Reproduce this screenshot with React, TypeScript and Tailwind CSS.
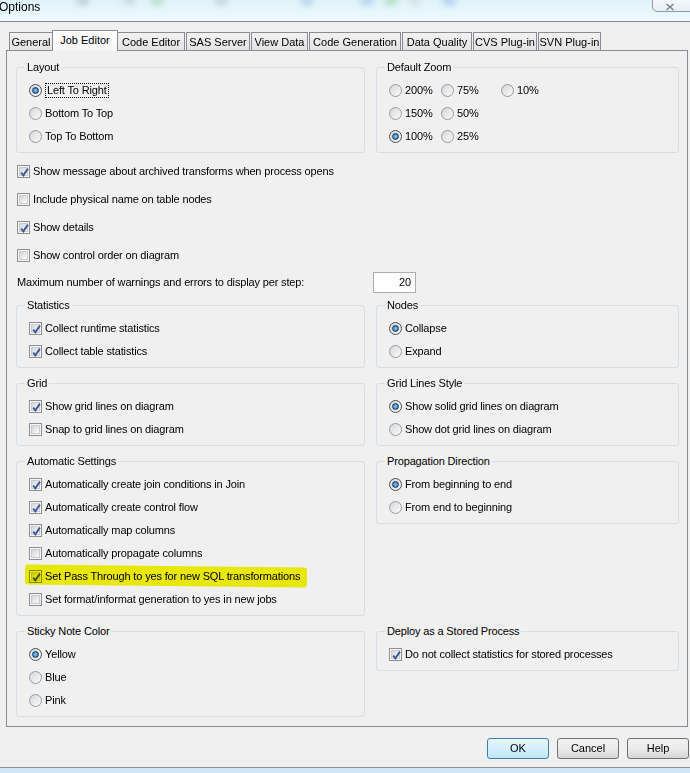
import React from 'react';

type Tab = { label: string; w: string; active?: boolean };

const tabs: Tab[] = [
  { label: 'General', w: 'w-[44px]' },
  { label: 'Job Editor', w: 'w-[62px]', active: true },
  { label: 'Code Editor', w: 'w-[68px]' },
  { label: 'SAS Server', w: 'w-[64px]' },
  { label: 'View Data', w: 'w-[57px]' },
  { label: 'Code Generation', w: 'w-[92px]' },
  { label: 'Data Quality', w: 'w-[70px]' },
  { label: 'CVS Plug-in', w: 'w-[64px]' },
  { label: 'SVN Plug-in', w: 'w-[63px]' },
];

const CheckBox = ({ checked }: { checked: boolean }) => (
  <span className="relative flex h-[13px] w-[13px] shrink-0 items-center justify-center border border-[#8e8f8f] bg-[#f6f6f6]">
    <span className="h-[9px] w-[9px] border border-[#c9cbcf] bg-linear-to-br from-[#d3d5d9] to-[#fbfbfb]" />
    {checked && (
      <svg className="absolute left-[1px] top-[1px]" width="11" height="11" viewBox="0 0 11 11">
        <path d="M2.2 5.6 L4.4 8.3 L8.9 1.6" fill="none" stroke="#3c5a9a" strokeWidth="1.9" />
      </svg>
    )}
  </span>
);

const Radio = ({ checked }: { checked: boolean }) => (
  <span
    className={`flex h-[13px] w-[13px] shrink-0 items-center justify-center rounded-full border bg-linear-to-br from-[#d4d6da] to-[#fbfbfb] ${
      checked ? 'border-[#4e4e4e]' : 'border-[#9a9a9a]'
    }`}
  >
    {checked && (
      <span className="h-[7px] w-[7px] rounded-full border border-[#1d3b5c] bg-radial from-[#8fd0fb] to-[#0b5aa3]" />
    )}
  </span>
);

const Group: React.FC<{ title: string; children: React.ReactNode }> = ({ title, children }) => (
  <div className="relative rounded-[3px] border border-[#d5dfe5] pb-[4px] pt-[11px]">
    <span className="absolute left-[8px] top-[-8px] bg-[#f0f0f0] px-[2px] leading-[14px]">{title}</span>
    {children}
  </div>
);

const CheckRow = ({ label, checked = false }: { label: string; checked?: boolean }) => (
  <div className="flex h-[23px] items-center gap-[3px] pl-[12px]">
    <CheckBox checked={checked} />
    <span>{label}</span>
  </div>
);

const RadioRow = ({ label, checked = false, focus = false }: { label: string; checked?: boolean; focus?: boolean }) => (
  <div className="flex h-[23px] items-center gap-[3px] pl-[12px]">
    <Radio checked={checked} />
    <span className={focus ? 'border border-dotted border-black px-[1px] leading-[13px]' : ''}>{label}</span>
  </div>
);

const Row = ({ label, checked = false }: { label: string; checked?: boolean }) => (
  <div className="flex h-[28px] items-center gap-[3px] pl-[1px]">
    <CheckBox checked={checked} />
    <span>{label}</span>
  </div>
);

const Button = ({ label, primary = false }: { label: string; primary?: boolean }) => (
  <div
    className={`flex h-[21px] w-[62px] items-center justify-center rounded-[3px] border ${
      primary
        ? 'border-[#3c7fb1] bg-linear-to-b from-[#eaf6fd] to-[#bee6fd]'
        : 'border-[#707070] bg-linear-to-b from-[#f2f2f2] via-[#ebebeb] to-[#d5d5d5]'
    }`}
  >
    {label}
  </div>
);

const blobs = [
  { x: 'left-[76px]', c: 'bg-[#b8c4cc]' },
  { x: 'left-[122px]', c: 'bg-[#c6d6dc]' },
  { x: 'left-[150px]', c: 'bg-[#a8d8b8]' },
  { x: 'left-[214px]', c: 'bg-[#c2ccd6]' },
  { x: 'left-[300px]', c: 'bg-[#b0c8e8]' },
  { x: 'left-[360px]', c: 'bg-[#a9c6ef]' },
  { x: 'left-[384px]', c: 'bg-[#a6dcb4]' },
  { x: 'left-[408px]', c: 'bg-[#d6dde2]' },
  { x: 'left-[442px]', c: 'bg-[#a4c4ee]' },
];

export default function App() {
  return (
    <div className="relative flex h-[773px] w-[690px] flex-col overflow-hidden bg-[#f0f0f0] font-['Liberation_Sans',Arial,sans-serif] text-[11px] tracking-[-0.15px] text-black">
      {/* title bar */}
      <div className="relative h-[22px] shrink-0 border-b border-[#8a8a8a] bg-linear-to-b from-[#e0f3fa] to-[#eefaff]">
        {blobs.map((b, i) => (
          <span key={i} className={`absolute top-[-6px] h-[12px] w-[14px] rounded-full opacity-70 blur-[3px] ${b.x} ${b.c}`} />
        ))}
        <span className="absolute left-[-1px] top-[0px] text-[12px] leading-[15px] tracking-normal">Options</span>
        <div className="absolute left-[652px] top-[-2px] flex h-[14px] w-[42px] items-center justify-center rounded-bl-[5px] border border-[#8d9aae] bg-linear-to-b from-[#f7fafd] to-[#e6eef5]">
          <svg width="10" height="8" viewBox="0 0 10 8" className="ml-[-6px] mt-[3px]">
            <path d="M1.5 1 L8.5 7 M8.5 1 L1.5 7" stroke="#6b7685" strokeWidth="1.1" fill="none" />
          </svg>
        </div>
      </div>

      {/* tabs */}
      <div className="flex h-[28px] shrink-0 items-end gap-[1px] pl-[9px] tracking-normal">
        {tabs.map((t) =>
          t.active ? (
            <div
              key={t.label}
              className="relative z-10 mx-[-2px] -mb-[1px] flex h-[21px] w-[66px] items-start justify-center border border-b-0 border-[#898c95] bg-linear-to-b from-white to-[#f6f6f6] pt-[2px] leading-[14px]"
            >
              {t.label}
            </div>
          ) : (
            <div
              key={t.label}
              className={`flex h-[18px] ${t.w} items-center justify-center border border-b-0 border-[#898c95] bg-linear-to-b from-[#f2f2f2] to-[#e3e3e3] pt-[1px]`}
            >
              {t.label}
            </div>
          )
        )}
      </div>

      {/* panel */}
      <div className="ml-[6px] h-[677px] w-[682px] shrink-0 border border-[#898c95] bg-[#f0f0f0] pl-[9px] pr-[8px]">
        <div className="mt-[16px] grid grid-cols-[349px_303px] gap-x-[11px]">
          <Group title="Layout">
            <RadioRow label="Left To Right" checked focus />
            <RadioRow label="Bottom To Top" />
            <RadioRow label="Top To Bottom" />
          </Group>
          <Group title="Default Zoom">
            <div className="grid grid-cols-[64px_60px_1fr]">
              <RadioRow label="200%" />
              <div className="-ml-[12px]"><RadioRow label="75%" /></div>
              <div className="-ml-[12px]"><RadioRow label="10%" /></div>
              <RadioRow label="150%" />
              <div className="-ml-[12px]"><RadioRow label="50%" /></div>
              <div />
              <RadioRow label="100%" checked />
              <div className="-ml-[12px]"><RadioRow label="25%" /></div>
              <div />
            </div>
          </Group>
        </div>

        <div className="mt-[4px]">
          <Row label="Show message about archived transforms when process opens" checked />
          <Row label="Include physical name on table nodes" />
          <Row label="Show details" checked />
          <Row label="Show control order on diagram" />
          <div className="flex h-[26px] items-center pl-[1px]">
            <span className="w-[356px]">Maximum number of warnings and errors to display per step:</span>
            <div className="flex h-[21px] w-[43px] items-center justify-end border border-[#abadb3] bg-white pr-[4px]">20</div>
          </div>
        </div>

        <div className="mt-[10px] grid grid-cols-[349px_303px] items-start gap-x-[11px]">
          <Group title="Statistics">
            <CheckRow label="Collect runtime statistics" checked />
            <CheckRow label="Collect table statistics" checked />
          </Group>
          <Group title="Nodes">
            <RadioRow label="Collapse" checked />
            <RadioRow label="Expand" />
          </Group>
        </div>

        <div className="mt-[15px] grid grid-cols-[349px_303px] items-start gap-x-[11px]">
          <Group title="Grid">
            <CheckRow label="Show grid lines on diagram" checked />
            <CheckRow label="Snap to grid lines on diagram" />
          </Group>
          <Group title="Grid Lines Style">
            <RadioRow label="Show solid grid lines on diagram" checked />
            <RadioRow label="Show dot grid lines on diagram" />
          </Group>
        </div>

        <div className="mt-[15px] grid grid-cols-[349px_303px] items-start gap-x-[11px]">
          <Group title="Automatic Settings">
            <CheckRow label="Automatically create join conditions in Join" checked />
            <CheckRow label="Automatically create control flow" checked />
            <CheckRow label="Automatically map columns" checked />
            <CheckRow label="Automatically propagate columns" />
            <div className="relative">
              <CheckRow label="Set Pass Through to yes for new SQL transformations" checked />
              {/* highlighter mark */}
              <span className="pointer-events-none absolute left-[8px] top-[1px] h-[20px] w-[282px] rotate-[0.6deg] rounded-[3px] bg-[#f6f60a] mix-blend-multiply" />
            </div>
            <CheckRow label="Set format/informat generation to yes in new jobs" />
          </Group>
          <Group title="Propagation Direction">
            <RadioRow label="From beginning to end" checked />
            <RadioRow label="From end to beginning" />
          </Group>
        </div>

        <div className="mt-[15px] grid grid-cols-[349px_303px] items-start gap-x-[11px]">
          <Group title="Sticky Note Color">
            <RadioRow label="Yellow" checked />
            <RadioRow label="Blue" />
            <RadioRow label="Pink" />
          </Group>
          <Group title="Deploy as a Stored Process">
            <CheckRow label="Do not collect statistics for stored processes" checked />
          </Group>
        </div>
      </div>

      {/* buttons */}
      <div className="mt-[11px] flex h-[21px] shrink-0 justify-end gap-[8px] pr-[1px] tracking-normal">
        <Button label="OK" primary />
        <Button label="Cancel" />
        <Button label="Help" />
      </div>

      <div className="mt-[8px] h-[7px] shrink-0 border-t border-[#8f8f8f] bg-[#cfe6f8]" />
    </div>
  );
}
